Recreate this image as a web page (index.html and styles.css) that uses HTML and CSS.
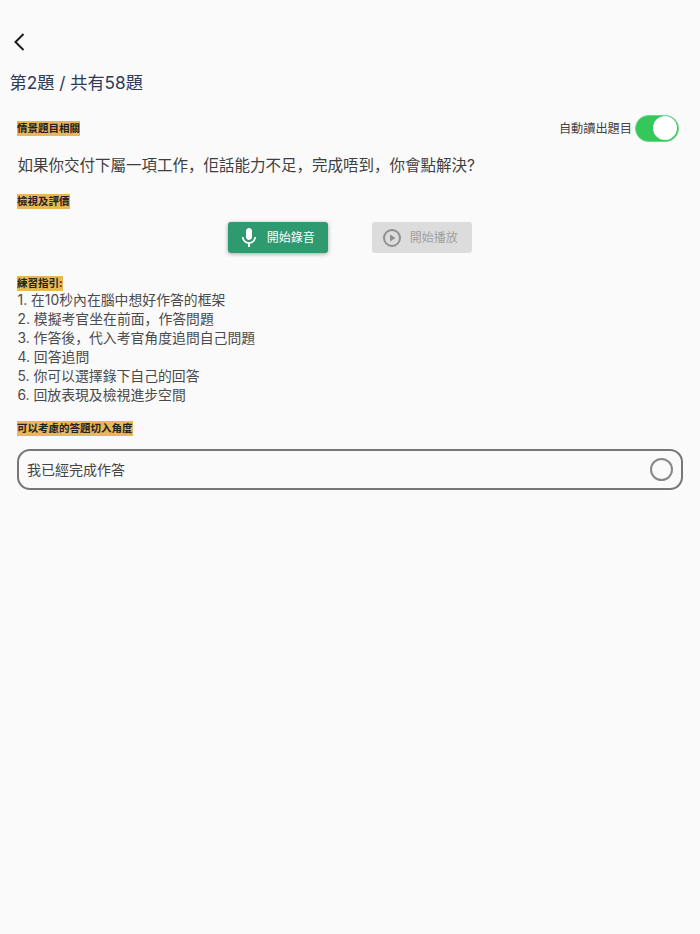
FILE: index.html
```html
<!DOCTYPE html>
<html lang="zh">
<head>
<meta charset="utf-8">
<title>練習</title>
<link rel="stylesheet" href="styles.css">
</head>
<body>
<div class="page">
  <header class="top">
    <button class="back" aria-label="返回">
      <svg width="24" height="24" viewBox="0 0 24 24"><path d="M13.500 4 L5.500 12 L13.500 20" fill="none" stroke="#1c1c1e" stroke-width="2"/></svg>
    </button>
    <h1 class="title">第2題 / 共有58題</h1>
  </header>
  <section class="content">
    <div class="row-between">
      <span class="tag">情景題目相關</span>
      <div class="auto">
        <span class="auto-label">自動讀出題目</span>
        <span class="switch"><span class="knob"></span></span>
      </div>
    </div>
    <p class="question">如果你交付下屬一項工作，佢話能力不足，完成唔到，你會點解決?</p>
    <div class="tag-row"><span class="tag">檢視及評價</span></div>
    <div class="actions">
      <button class="btn btn-record">
        <svg width="24" height="24" viewBox="0 0 24 24"><path fill="#fff" d="M12 14c1.660 0 3-1.340 3-3V5c0-1.660-1.340-3-3-3S9 3.340 9 5v6c0 1.660 1.340 3 3 3zm5.300-3c0 3-2.540 5.100-5.300 5.100S6.700 14 6.700 11H5c0 3.410 2.720 6.230 6 6.720V21h2v-3.280c3.280-.48 6-3.300 6-6.720h-1.700z"/></svg>
        <span class="btn-label">開始錄音</span>
      </button>
      <button class="btn btn-play">
        <svg width="24" height="24" viewBox="0 0 24 24"><circle cx="12" cy="12" r="8" fill="none" stroke="#8f8f8f" stroke-width="2"/><path fill="#8f8f8f" d="M10 8.500v7l5.500-3.500z"/></svg>
        <span class="btn-label">開始播放</span>
      </button>
    </div>
    <div class="guide">
      <div class="tag-line"><span class="tag">練習指引:</span></div>
      <ol class="steps">
        <li>1. 在10秒內在腦中想好作答的框架</li>
        <li>2. 模擬考官坐在前面，作答問題</li>
        <li>3. 作答後，代入考官角度追問自己問題</li>
        <li>4. 回答追問</li>
        <li>5. 你可以選擇錄下自己的回答</li>
        <li>6. 回放表現及檢視進步空間</li>
      </ol>
    </div>
    <div class="tag-row angle"><span class="tag">可以考慮的答題切入角度</span></div>
    <div class="choice">
      <span class="choice-label">我已經完成作答</span>
      <span class="radio"></span>
    </div>
  </section>
</div>
</body>
</html>
```
FILE: styles.css
```css
* { box-sizing: border-box; }
html, body { margin: 0; padding: 0; }
body {
  width: 700px;
  height: 934px;
  overflow: hidden;
  background: #fafafa;
  color: #333;
  font-family: Inter, "Noto Sans CJK SC", sans-serif;
}
.page { display: flex; flex-direction: column; height: 100%; }
.top { padding: 30px 0 0 9.500px; }
.back {
  display: block;
  width: 24px;
  height: 24px;
  padding: 0;
  margin: 0;
  border: 0;
  background: none;
}
.title {
  margin: 17px 0 0;
  font-size: 17.200px;
  line-height: 24px;
  font-weight: 400;
  color: #2e3a59;
}
.content { padding: 0 17.500px 0 17px; margin-top: 19px; }
.row-between {
  display: flex;
  justify-content: space-between;
  align-items: center;
  height: 28px;
}
.tag {
  display: inline-block;
  background: #e9b659;
  color: #222;
  font-size: 10.500px;
  line-height: 15px;
  font-weight: 700;
}
.auto { display: flex; align-items: center; gap: 3px; margin-right: 3.500px; }
.auto-label { font-size: 12.200px; color: #444; }
.switch {
  display: flex;
  justify-content: flex-end;
  align-items: center;
  width: 44px;
  height: 27px;
  padding: 1px;
  border-radius: 14px;
  background: #34c759;
  border: 1px solid #6cd68a;
}
.knob { width: 24px; height: 24px; border-radius: 50%; background: #fff; }
.question {
  margin: 13px 0 0;
  padding-left: .5px;
  font-size: 15.500px;
  line-height: 22px;
  color: #3f3f3f;
}
.tag-row { margin-top: 17px; line-height: 15px; display: flex; }
.actions {
  display: flex;
  justify-content: center;
  gap: 44px;
  margin-top: 13px;
}
.btn {
  display: flex;
  align-items: center;
  justify-content: flex-start;
  gap: 6px;
  width: 100px;
  height: 31px;
  padding: 0 0 0 9px;
  border: 0;
  border-radius: 3px;
  font-family: inherit;
  font-size: 12px;
  font-weight: 400;
}
.btn-label { padding-bottom: 2px; }
.btn-record {
  background: #2e9a6f;
  color: #fff;
  box-shadow: 0 1px 4px rgba(0,0,0,.35);
}
.btn-play { background: #dcdcdc; color: #a0a0a0; padding-left: 8px; }
.guide { margin-top: 23px; }
.tag-line { display: flex; height: 15px; }
.steps {
  list-style: none;
  margin: 0;
  padding: 0 0 0 .5px;
  font-size: 13.850px;
  line-height: 19px;
  color: #4a4a4a;
}
.angle { margin-top: 16px; }
.choice {
  display: flex;
  justify-content: space-between;
  align-items: center;
  height: 41px;
  margin-top: 13px;
  padding: 0 8px;
  border: 2px solid #777;
  border-radius: 13px;
  font-size: 14px;
  color: #444;
}
.choice-label { padding-bottom: 2px; }
.radio {
  width: 23px;
  height: 23px;
  border: 2px solid #888;
  border-radius: 50%;
}
```
